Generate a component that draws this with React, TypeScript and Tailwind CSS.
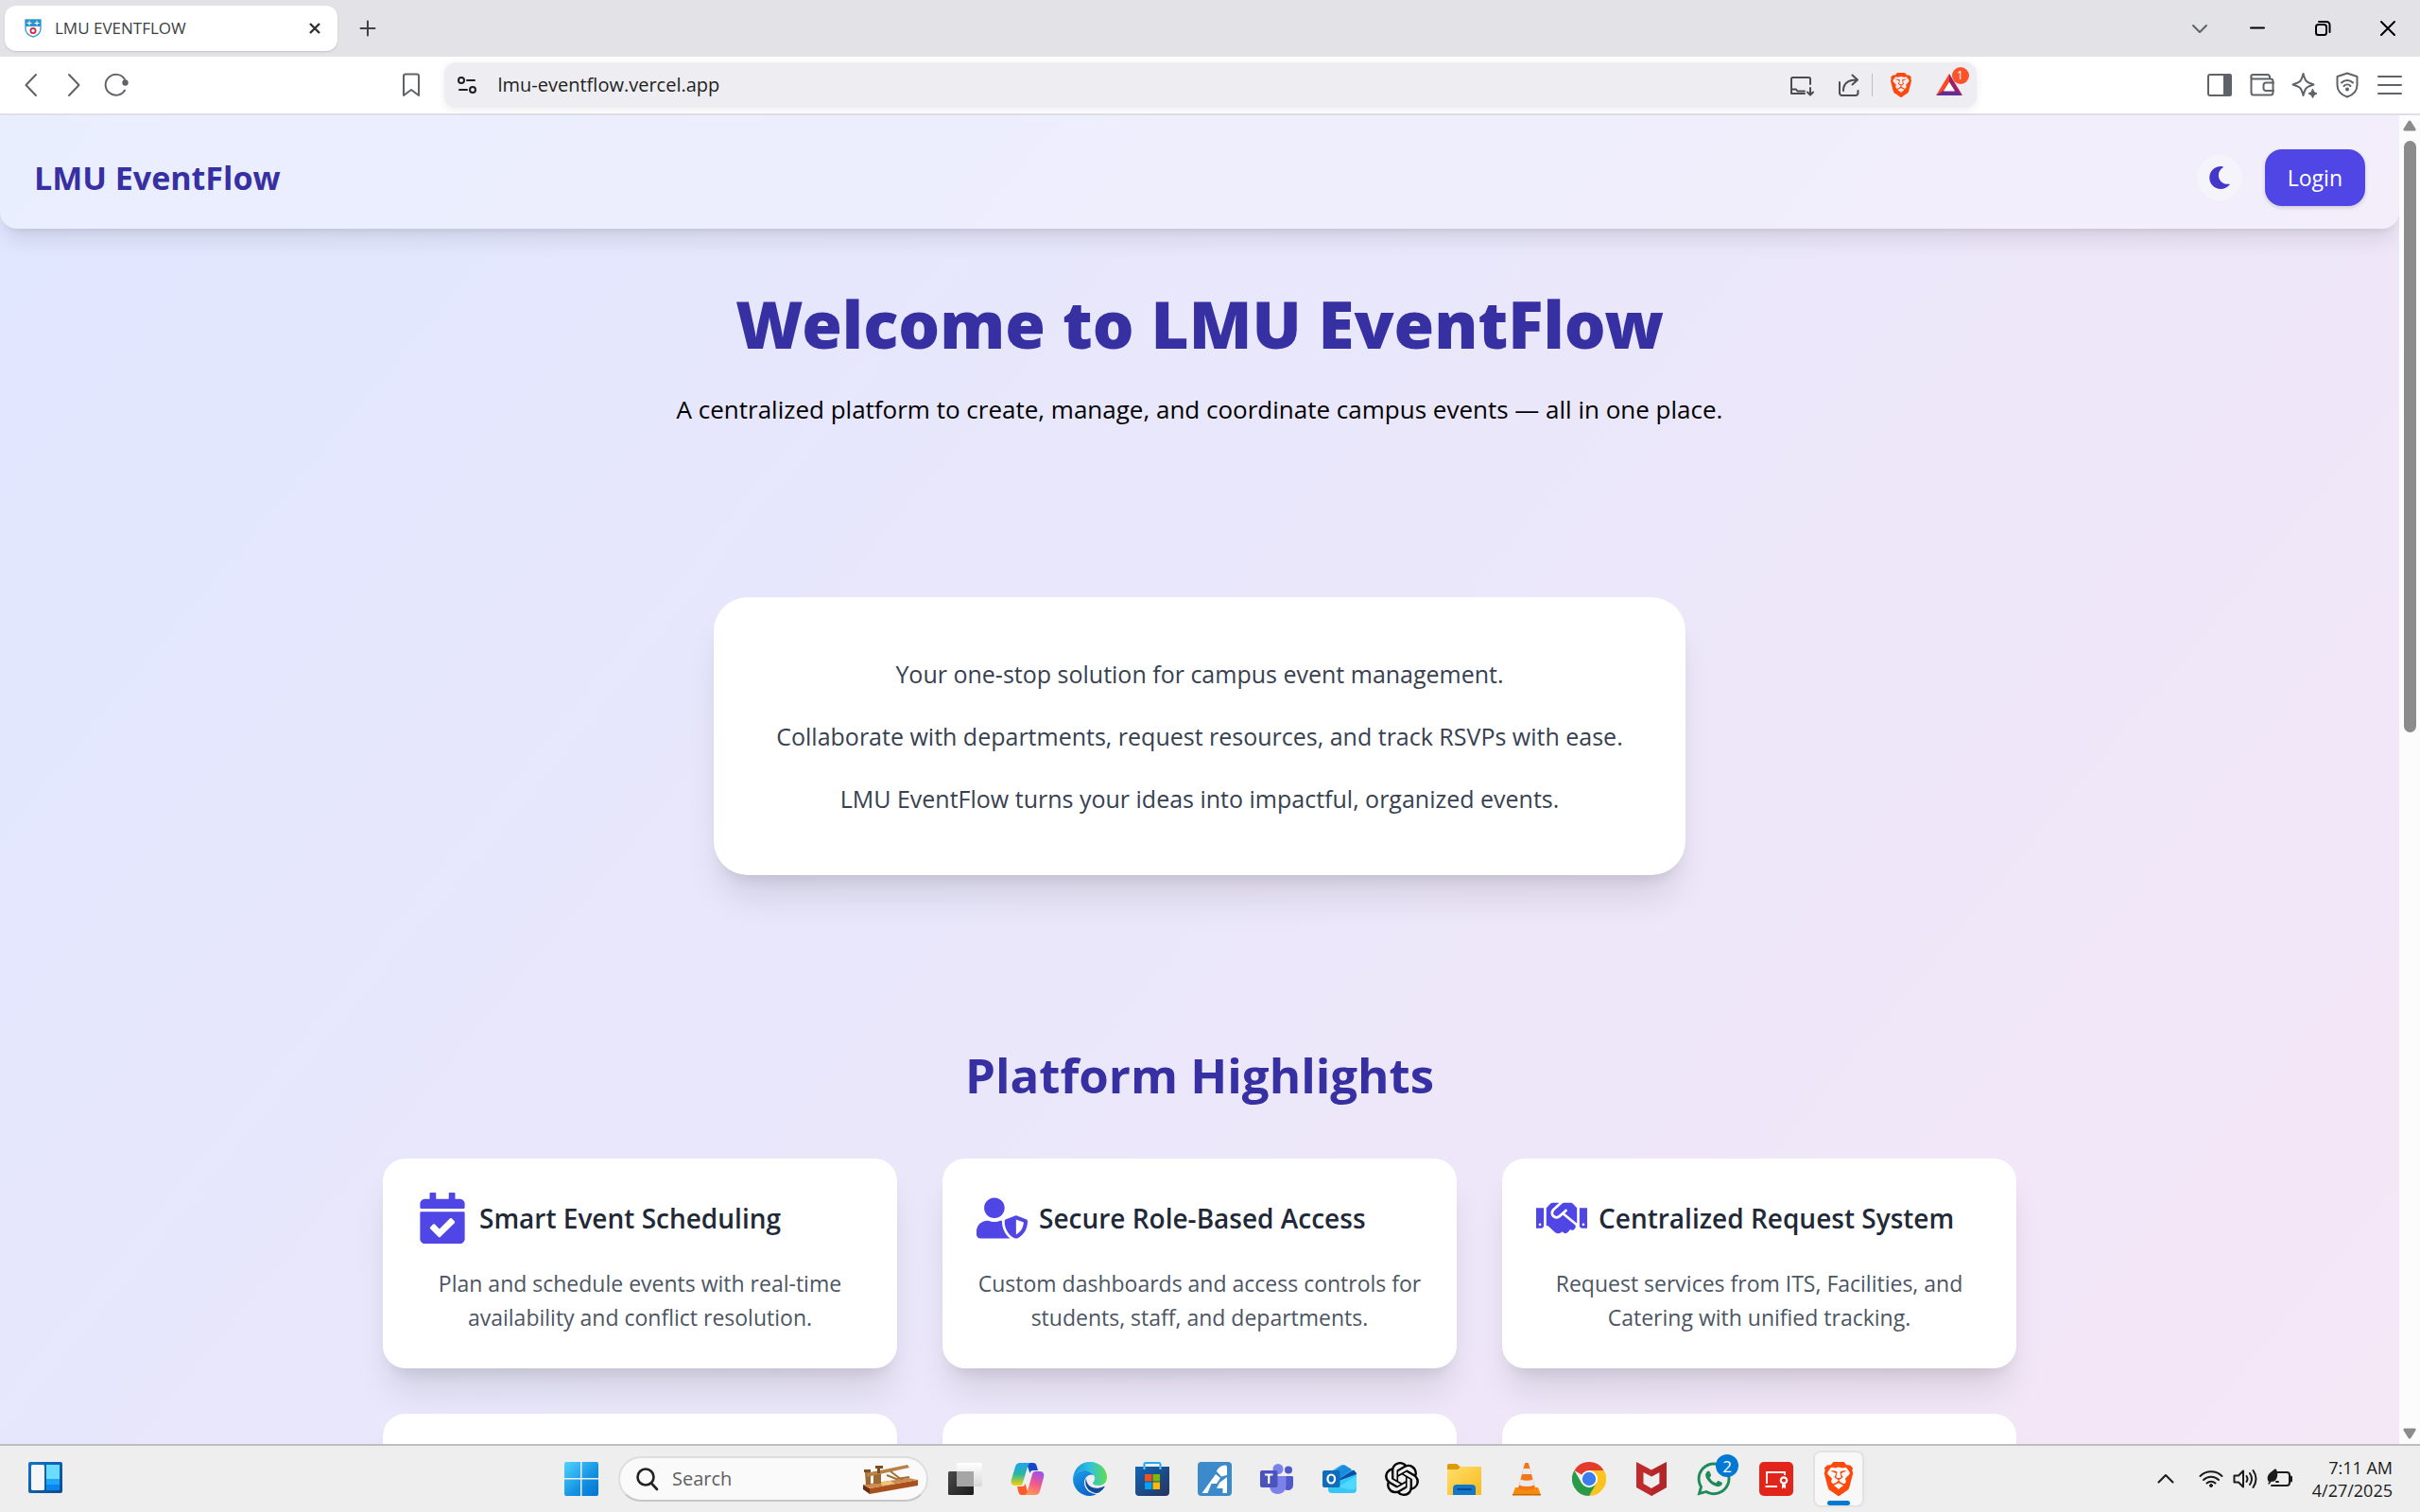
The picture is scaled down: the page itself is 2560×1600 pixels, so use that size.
import React from "react";
import { FaCalendarCheck, FaHandshake, FaMoon, FaUserShield, FaWhatsapp } from "react-icons/fa";
import { SiBrave, SiOpenai } from "react-icons/si";

type IconProps = { label: string; children: React.ReactNode; className?: string };

/* ---------- Browser chrome ---------- */

function ToolButton({ label, children, className = "text-[#5f6368]" }: IconProps) {
  return (
    <button type="button" aria-label={label} className={`relative grid size-[30px] shrink-0 place-items-center ${className}`}>
      {children}
    </button>
  );
}

function Line({ children, width = 2 }: { children: React.ReactNode; width?: number }) {
  return (
    <svg viewBox="0 0 30 30" className="size-[30px]" fill="none" stroke="currentColor" strokeWidth={width} strokeLinecap="round" strokeLinejoin="round" aria-hidden="true">
      {children}
    </svg>
  );
}

function TabStrip() {
  return (
    <div className="flex h-[60px] shrink-0 items-center bg-[#e3e2e7] pl-[5px]">
      <div className="flex h-12 w-[352px] items-center rounded-xl bg-white pr-3 pl-[21px] shadow-[0_1px_2px_rgba(0,0,0,0.15)]">
        <svg viewBox="0 0 18 20" className="h-5 w-[18px]" aria-hidden="true">
          <path d="M1 1h16v9c0 5-4 8-8 9-4-1-8-4-8-9z" fill="#fff" stroke="#3f9fd0" strokeWidth="1.4" />
          <path d="M1 1h16v7H1z" fill="#2b93cb" />
          <path d="M5 2v5M2.5 4.5h5M13 2v5M10.500 4.500h5" stroke="#fff" strokeWidth="1" />
          <circle cx="9" cy="12.500" r="2.600" fill="#fff" stroke="#cf2745" strokeWidth="1.800" />
        </svg>
        <span className="ml-[14px] flex-1 text-[17px] leading-6 text-[#3b3e42]">LMU EVENTFLOW</span>
        <button type="button" aria-label="Close tab" className="grid size-6 place-items-center text-[#2f3235]">
          <svg viewBox="0 0 24 24" className="size-6" stroke="currentColor" strokeWidth="2.400" aria-hidden="true">
            <path d="M7 7l10 10M17 7L7 17" />
          </svg>
        </button>
      </div>
      <button type="button" aria-label="New tab" className="ml-[17px] text-[#3f4246]">
        <Line>
          <path d="M15 7.500v15M7.500 15h15" />
        </Line>
      </button>
      <div className="ml-auto flex h-full items-center text-black">
        <button type="button" aria-label="Search tabs" className="mr-[11px] text-[#5f6368]">
          <Line>
            <path d="M8 12l7 7 7-7" />
          </Line>
        </button>
        <button type="button" aria-label="Minimize" className="grid h-full w-[69px] place-items-center">
          <Line>
            <path d="M8 14.500h14" />
          </Line>
        </button>
        <button type="button" aria-label="Restore" className="grid h-full w-[69px] place-items-center">
          <Line>
            <rect x="8" y="11" width="11" height="11" rx="2.500" />
            <path d="M11 8h8a3.500 3.500 0 0 1 3.500 3.500V19" />
          </Line>
        </button>
        <button type="button" aria-label="Close" className="grid h-full w-[69px] place-items-center">
          <Line>
            <path d="M8 8l14 14M22 8L8 22" />
          </Line>
        </button>
      </div>
    </div>
  );
}

function Toolbar() {
  return (
    <div className="grid h-[62px] shrink-0 grid-cols-[minmax(0,1fr)_minmax(0,1621px)_minmax(0,1fr)] items-center border-b-2 border-[#e0dfe5] bg-white">
      <div className="flex items-center gap-[15px] pr-5 pl-[18px]">
        <ToolButton label="Back">
          <Line><path d="M20 4L9.500 15 20 26" /></Line>
        </ToolButton>
        <ToolButton label="Forward">
          <Line><path d="M10 4l10.500 11L10 26" /></Line>
        </ToolButton>
        <ToolButton label="Reload">
          <Line>
            <path d="M24 20.500A11 11 0 1 1 24 9" />
            <circle cx="24.500" cy="12.500" r="2.200" fill="currentColor" />
          </Line>
        </ToolButton>
        <div className="ml-auto">
          <ToolButton label="Bookmark this page">
            <Line><path d="M7 5.500a2 2 0 0 1 2-2h12a2 2 0 0 1 2 2V26l-8-6-8 6z" /></Line>
          </ToolButton>
        </div>
      </div>

      <div className="flex h-12 items-center rounded-xl bg-[#ededf2] pr-[14px] pl-[10px] shadow-[0_2px_8px_rgba(0,0,0,0.08)]">
        <ToolButton label="Site information" className="text-[#1f1f1f]">
          <Line>
            <circle cx="8" cy="10" r="3" />
            <path d="M14 10h8M6 20h8" />
            <circle cx="20" cy="20" r="3" />
          </Line>
        </ToolButton>
        <input
          aria-label="Address"
          defaultValue="lmu-eventflow.vercel.app"
          className="ml-[17px] min-w-0 flex-1 bg-transparent text-[20px] leading-7 text-[#1f1f1f] outline-none"
        />
        <div className="flex items-center">
          <ToolButton label="Install app" className="mr-5 text-[#4b4d52]">
            <Line>
              <path d="M24 14V8.500A1.500 1.500 0 0 0 22.500 7h-17A1.500 1.500 0 0 0 4 8.500V24h14" />
              <path d="M4 19.500h5l1.500 2H18M24 18v7M21 22.500l3 3 3-3" />
            </Line>
          </ToolButton>
          <ToolButton label="Share" className="mr-[9px] text-[#4b4d52]">
            <Line>
              <path d="M5 12v11.500A2.500 2.500 0 0 0 7.500 26H22a2.500 2.500 0 0 0 2.500-2.500V21M9 21c0-7 4-11.500 14-11.500M18.500 4.500l5.500 5-5.500 5" />
            </Line>
          </ToolButton>
          <span className="mr-[15px] h-6 w-px bg-[#bdbdc4]" />
          <ToolButton label="Brave Shields" className="mr-[21px]">
            <BraveLion className="h-[28px] w-[26px]" />
          </ToolButton>
          <ToolButton label="Brave Rewards">
            <svg viewBox="0 0 30 30" className="size-[30px]" aria-hidden="true">
              <path d="M15 3L1 26l8-4 6-10z" fill="#ff4724" />
              <path d="M15 3l14 23-8-4-6-10z" fill="#9e1f63" />
              <path d="M1 26h28l-7.500-5h-13z" fill="#662d91" />
              <path d="M15 12l6 9.500H9z" fill="#fff" />
            </svg>
            <span className="absolute -top-1 left-[18px] grid size-[18px] place-items-center rounded-full bg-[#fb542b] text-[12px] leading-none text-white">1</span>
          </ToolButton>
        </div>
      </div>

      <div className="flex items-center justify-end gap-[15px] pr-[17px]">
        <ToolButton label="Sidebar">
          <Line>
            <rect x="3" y="4" width="24" height="22" rx="2" />
            <path d="M20 4h5a2 2 0 0 1 2 2v18a2 2 0 0 1-2 2h-5z" fill="currentColor" />
          </Line>
        </ToolButton>
        <ToolButton label="Wallet">
          <Line>
            <path d="M23 8V6.500A2.500 2.500 0 0 0 20.500 4h-15a2 2 0 0 0 0 4.500H24a2.500 2.500 0 0 1 2.500 2.500v12a2.500 2.500 0 0 1-2.500 2.500H6A2.500 2.500 0 0 1 3.500 23V6" />
            <path d="M27 12.500h-8a2.500 2.500 0 0 0-2.500 2.500v3.500A2.500 2.500 0 0 0 19 21h8" />
          </Line>
        </ToolButton>
        <ToolButton label="Leo AI">
          <Line>
            <path d="M13.500 3c2 8 3 9 11 11.500-8 2.500-9 3.500-11 11.500-2-8-3-9-11-11.500 8-2.500 9-3.500 11-11.500z" />
            <path d="M23.500 19.500l1.500 3 3 1.500-3 1.500-1.500 3-1.500-3-3-1.500 3-1.500z" fill="currentColor" strokeWidth="1" />
          </Line>
        </ToolButton>
        <ToolButton label="VPN">
          <Line>
            <path d="M15 2.500l10.500 3.500v9c0 6.500-4.500 10.500-10.500 12.500C9 25.500 4.500 21.500 4.500 15V6z" />
            <path d="M9 12.500a8.500 8.500 0 0 1 12 0M11.500 16a5 5 0 0 1 7 0" />
            <circle cx="15" cy="19.500" r="1" fill="currentColor" />
          </Line>
        </ToolButton>
        <ToolButton label="Menu">
          <Line><path d="M3 6h24M3 15h24M3 24h24" /></Line>
        </ToolButton>
      </div>
    </div>
  );
}

function BraveLion({ className }: { className: string }) {
  return <SiBrave className={`${className} text-[#fb4a0c]`} aria-hidden="true" />;
}

function Scrollbar() {
  return (
    <div className="flex w-[22px] shrink-0 flex-col items-center bg-[#fcfcfc] py-[5px]" aria-hidden="true">
      <svg viewBox="0 0 14 12" className="h-3 w-[14px]" fill="#8b8b8b"><path d="M7 0.500Q7.800 0.500 8.500 1.500l5 8Q14 11.500 12.500 11.500h-11Q0 11.500.5 9.500l5-8Q6.200.5 7 .5z" /></svg>
      <div className="mt-[10px] h-[626px] w-[13px] rounded-full bg-[#8b8b8b]" />
      <svg viewBox="0 0 14 12" className="mt-auto h-3 w-[14px]" fill="#8b8b8b"><path d="M7 11.500Q7.800 11.500 8.500 10.500l5-8Q14 .5 12.500.5h-11Q0 .5.5 2.500l5 8Q6.200 11.500 7 11.500z" /></svg>
    </div>
  );
}

/* ---------- Site ---------- */

const FEATURES = [
  { Icon: FaCalendarCheck, title: "Smart Event Scheduling", text: "Plan and schedule events with real-time availability and conflict resolution." },
  { Icon: FaUserShield, title: "Secure Role-Based Access", text: "Custom dashboards and access controls for students, staff, and departments." },
  { Icon: FaHandshake, title: "Centralized Request System", text: "Request services from ITS, Facilities, and Catering with unified tracking." },
];

const CARD_SHADOW = "shadow-[0_30px_37px_-7px_rgba(0,0,0,0.1),0_12px_15px_-9px_rgba(0,0,0,0.1)]";

function Site() {
  return (
    <div className="min-h-[3070px] bg-linear-to-br from-[#e0e7ff] to-[#fce7f3]">
      <header className="flex items-center justify-between rounded-b-[18px] bg-white/30 px-9 pt-9 pb-6 shadow-[0_15px_22px_-4px_rgba(0,0,0,0.1),0_6px_9px_-6px_rgba(0,0,0,0.1)]">
        <a href="#home" className="text-[34px] leading-[54px] font-bold text-[#3730a3]">LMU EventFlow</a>
        <div className="flex items-center gap-6">
          <button type="button" aria-label="Toggle dark mode" className="grid size-12 place-items-center rounded-full bg-[#f5f4fb] text-[24px] text-[#4338ca]">
            <FaMoon />
          </button>
          <button type="button" className="h-[60px] rounded-[18px] bg-[#4f46e5] px-6 text-[23px] leading-9 text-white shadow-[0_2px_4px_rgba(0,0,0,0.15)]">Login</button>
        </div>
      </header>

      <main className="flex flex-col items-center px-6 text-center">
        <h1 className="mt-16 font-['Noto_Sans',sans-serif] text-[69px] leading-[72px] font-black text-[#3730a3]">Welcome to LMU EventFlow</h1>
        <p className="mt-[34px] text-[26px] leading-[42px] text-black">A centralized platform to create, manage, and coordinate campus events — all in one place.</p>

        <section className={`mt-[178px] flex w-full max-w-[1028px] flex-col gap-6 rounded-[36px] bg-white p-[60px] text-[25px] leading-[42px] text-[#374151] ${CARD_SHADOW}`}>
          <p>Your one-stop solution for campus event management.</p>
          <p>Collaborate with departments, request resources, and track RSVPs with ease.</p>
          <p>LMU EventFlow turns your ideas into impactful, organized events.</p>
        </section>

        <h2 className="mt-[181px] text-[51px] leading-[60px] font-bold text-[#3730a3]">Platform Highlights</h2>
        <div className="mt-[59px] grid w-full max-w-[1728px] grid-cols-3 gap-12">
          {FEATURES.map(({ Icon, title, text }) => (
            <article key={title} className={`rounded-3xl bg-white p-9 ${CARD_SHADOW}`}>
              <div className="flex items-center gap-3">
                <Icon className="size-[54px] shrink-0 text-[#4f46e5]" aria-hidden="true" />
                <h3 className="text-[28px] leading-[42px] font-semibold whitespace-nowrap text-[#1f2937]">{title}</h3>
              </div>
              <p className="mt-6 text-[23px] leading-9 text-[#4b5563]">{text}</p>
            </article>
          ))}
          {[0, 1, 2].map((n) => (
            <article key={n} className={`h-[222px] rounded-3xl bg-white ${CARD_SHADOW}`} />
          ))}
        </div>
      </main>
    </div>
  );
}

/* ---------- Taskbar ---------- */

function App36({ label, children }: IconProps) {
  return (
    <button type="button" aria-label={label} className="relative grid h-[60px] w-[54px] shrink-0 place-items-center">
      {children}
    </button>
  );
}

function Art({ children }: { children: React.ReactNode }) {
  return <svg viewBox="0 0 36 36" className="size-9" aria-hidden="true">{children}</svg>;
}

function Telegraph() {
  return (
    <svg viewBox="0 0 60 32" className="h-8 w-[60px] shrink-0" aria-hidden="true">
      <path d="M1 22l7 4v6l-7-5z" fill="#6b2c12" />
      <path d="M8 26l51-9v6L8 32z" fill="#a9501f" />
      <path d="M1 22l48-7 10 2-51 9z" fill="#d08a4e" />
      <path d="M18 20l12-2 4 3-12 2z" fill="#f0c777" />
      <path d="M3 9l6-2v15H4zM12 8h8v13h-8z" fill="#9a6a35" />
      <path d="M4 10l44-9 2 3L5 14z" fill="#b98145" />
      <path d="M14 2h8v3h-3v5h-3V5h-2zM2 6h7v3H2z" fill="#7d4d22" />
      <path d="M30 8l12 9M26 12l10 4 14-2" stroke="#a06e38" strokeWidth="2" fill="none" />
    </svg>
  );
}

function Taskbar() {
  return (
    <footer className="grid h-[72px] shrink-0 grid-cols-[minmax(0,1fr)_auto_minmax(0,1fr)] items-center border-t-2 border-[#bdbdbd] bg-[#eeeeee]">
      <button type="button" aria-label="Widgets" className="ml-[30px] size-9">
        <Art>
          <defs>
            <linearGradient id="wg" x1="0" y1="0" x2="1" y2="1"><stop offset="0" stopColor="#1173c7" /><stop offset="1" stopColor="#0a4c8f" /></linearGradient>
          </defs>
          <rect width="36" height="33" rx="2" fill="url(#wg)" />
          <rect x="3" y="3" width="14" height="27" rx="1.500" fill="#f6f6f6" />
          <path d="M19 3h14v15H19z" fill="#6bdcff" />
          <path d="M19 18h14v6H19z" fill="#1fa6fb" />
          <path d="M19 24h14v6H19z" fill="#0a84ee" />
        </Art>
      </button>

      <div className="flex items-center gap-3">
        <App36 label="Start">
          <Art>
            <defs>
              <linearGradient id="st" x1="0" y1="0" x2="1" y2="1"><stop offset="0" stopColor="#50d4ff" /><stop offset="0.600" stopColor="#1391e2" /><stop offset="1" stopColor="#0073d0" /></linearGradient>
            </defs>
            <path d="M2 0h15v17H0V2a2 2 0 0 1 2-2zM18.500 0H34a2 2 0 0 1 2 2v15H18.500zM0 18.500h17V36H2a2 2 0 0 1-2-2zM18.500 18.500H36V34a2 2 0 0 1-2 2H18.500z" fill="url(#st)" />
          </Art>
        </App36>
        <label className="flex h-12 w-[328px] items-center rounded-full border-2 border-[#dedede] border-b-[#c6c6c6] bg-[#fafafa] pr-2 pl-[15px]">
          <svg viewBox="0 0 26 26" className="size-[26px] shrink-0" fill="none" stroke="#222" strokeWidth="2.600" strokeLinecap="round" aria-hidden="true">
            <circle cx="12" cy="11" r="8.500" />
            <path d="M18 17.500l6 6.500" />
          </svg>
          <input type="search" aria-label="Search" placeholder="Search" className="ml-[14px] min-w-0 flex-1 bg-transparent text-[20px] leading-7 outline-none placeholder:text-[#5f5f5f]" />
          <Telegraph />
        </label>
        <App36 label="Task view">
          <Art>
            <defs>
              <linearGradient id="tv" x1="0" y1="0" x2="1" y2="1"><stop offset="0" stopColor="#4a4a4a" /><stop offset="1" stopColor="#1c1c1c" /></linearGradient>
              <linearGradient id="tw" x1="0" y1="0" x2="0" y2="1"><stop offset="0" stopColor="#ffffff" /><stop offset="1" stopColor="#d9d9d9" /></linearGradient>
            </defs>
            <rect y="10" width="27" height="25" rx="1.500" fill="url(#tv)" />
            <rect x="9" y="1" width="27" height="25" rx="1.500" fill="url(#tw)" />
            <path d="M9 10h18v16H10.500A1.500 1.500 0 0 1 9 24.500z" fill="#a6a6a6" />
          </Art>
        </App36>
        <App36 label="Copilot">
          <Art>
            <defs>
              <linearGradient id="ca" x1="0.300" y1="0" x2="0.300" y2="1"><stop offset="0" stopColor="#1fa2ef" /><stop offset="0.500" stopColor="#2bb6a3" /><stop offset="1" stopColor="#f5d300" /></linearGradient>
              <linearGradient id="cb" x1="0.600" y1="0" x2="0.300" y2="1"><stop offset="0" stopColor="#a24fe8" /><stop offset="0.500" stopColor="#f1598b" /><stop offset="1" stopColor="#ff9a4d" /></linearGradient>
            </defs>
            <path d="M17 1h7c2 0 3 1 3.600 3L29 9h-5c-2 0-3 1-3.600 3z" fill="#1647c9" />
            <path d="M10 1h11c-2 1-2.600 3-3.200 5L13 22c-.7 2.500-2 3-4 3H5c-4 0-5-3-4-6.500L5 5c1-3 2.500-4 5-4z" fill="url(#ca)" />
            <path d="M19 35h-7c-2 0-3-1-3.600-3L7 26h5c2 0 3-1 3.600-3z" fill="#ff5a2d" />
            <path d="M26 35H15c2-1 2.600-3 3.200-5L23 13c.7-2.500 2-3 4-3h4c4 0 5 3 4 6.500L31 31c-1 3-2.500 4-5 4z" fill="url(#cb)" />
          </Art>
        </App36>
        <App36 label="Microsoft Edge">
          <Art>
            <defs>
              <linearGradient id="ea" x1="0" y1="0.300" x2="1" y2="0.300"><stop offset="0" stopColor="#1793dd" /><stop offset="0.500" stopColor="#2fc2df" /><stop offset="1" stopColor="#62dd4c" /></linearGradient>
              <linearGradient id="eb" x1="0" y1="0" x2="0.600" y2="1"><stop offset="0" stopColor="#1aa0ea" /><stop offset="1" stopColor="#0b62c9" /></linearGradient>
            </defs>
            <path d="M0 18C1 7 8 0 18 0c11 0 18 8 18 16 0 6-4 9-9 9-4 0-6-1-6-2.500 0-1 2-2 2-5C23 13 18 9 12 9 6 9 1 13 0 18z" fill="url(#ea)" />
            <path d="M0 18C1 12.500 6 9 12 9c4 0 8 2 10 5-5-2-10 2-10 8 0 7 6 12 13 12-2 1.300-4.500 2-7 2C8 36 0 28 0 18z" fill="url(#eb)" />
            <path d="M14 17c-3 9 4 16 12 16 3-1 6-4 7.500-6.500.4-.8-.3-1-1-.6C24 30 14 27 14 17z" fill="#104a9c" />
          </Art>
        </App36>
        <App36 label="Microsoft Store">
          <Art>
            <defs>
              <linearGradient id="ms" x1="0" y1="0" x2="1" y2="1"><stop offset="0" stopColor="#0f67b8" /><stop offset="1" stopColor="#26335e" /></linearGradient>
            </defs>
            <path d="M9.500 8V2.500a1.500 1.500 0 0 1 1.500-1.500h14a1.500 1.500 0 0 1 1.500 1.500V8" fill="none" stroke="#24a9f0" strokeWidth="2" />
            <path d="M0 5h36v27a4 4 0 0 1-4 4H4a4 4 0 0 1-4-4z" fill="url(#ms)" />
            <path d="M9.500 8V5M26.500 8V5" stroke="#5ccbfb" strokeWidth="2" />
            <path d="M10 13h7.500v7.500H10z" fill="#f25022" /><path d="M18.500 13H26v7.500h-7.500z" fill="#7fba00" />
            <path d="M10 21.500h7.500V29H10z" fill="#00a4ef" /><path d="M18.500 21.500H26V29h-7.500z" fill="#ffb900" />
          </Art>
        </App36>
        <App36 label="AI editor">
          <Art>
            <rect width="36" height="36" rx="4" fill="#3c8ac9" />
            <path d="M4.500 33L19 13l5 4-4 6h-5.500L10.500 33zM20 10c1-3 4-6.500 10-6.500l1 1.500v9l-6 1.500zM23 22l8-6v17h-4.500v-5H20z" fill="#fff" />
          </Art>
        </App36>
        <App36 label="Microsoft Teams">
          <Art>
            <circle cx="30" cy="8.500" r="4" fill="#5059c9" />
            <path d="M25 15h8.500c1 0 1.500.6 1.500 1.500V24c0 4-2.500 6-6 6-2 0-4-1-4-3z" fill="#5059c9" />
            <circle cx="19" cy="7.500" r="5.500" fill="#7b83eb" />
            <path d="M10 15h17.500v10c0 5-3.500 9-9 9S10 30 10 25z" fill="#7b83eb" />
            <rect y="9" width="18.500" height="18" rx="2" fill="#4b53bc" />
            <path d="M5 13.500h8.500M9.250 13.500V23" stroke="#fff" strokeWidth="2.200" />
          </Art>
        </App36>
        <App36 label="Outlook">
          <Art>
            <path d="M6 12L19.500 3.500q1.500-1 3 0L36 12v4L18 28 6 20z" fill="#28a8ea" />
            <path d="M11 11l12-8 8 5-14 10z" fill="#1b8bdc" />
            <path d="M16 19L33 8.500l3 3.500v3L17 27z" fill="#0c4da2" />
            <path d="M6 24l30-11v16a4 4 0 0 1-4 4H10a4 4 0 0 1-4-4z" fill="#35c8f6" />
            <path d="M17 26l19-11v13q-6 3-19-2z" fill="#50d9ff" />
            <rect y="9" width="18.500" height="18" rx="2" fill="#0f6cbd" />
            <ellipse cx="9.250" cy="18" rx="3.800" ry="4.500" fill="none" stroke="#fff" strokeWidth="2.200" />
          </Art>
        </App36>
        <App36 label="ChatGPT"><SiOpenai className="size-9 text-black" aria-hidden="true" /></App36>
        <App36 label="File Explorer">
          <Art>
            <defs><linearGradient id="fe" x1="0" y1="0" x2="1" y2="1"><stop offset="0" stopColor="#ffdf6b" /><stop offset="1" stopColor="#f9b91c" /></linearGradient></defs>
            <path d="M0 3.500A1.500 1.500 0 0 1 1.500 2H10l4 3.500-4 4H0z" fill="#dd9a06" />
            <path d="M0 8h11l4-3h20a1 1 0 0 1 1 1v29H0z" fill="url(#fe)" />
            <path d="M6 35v-7a4 4 0 0 1 4-4h16a4 4 0 0 1 4 4v7z" fill="#1377c9" />
            <path d="M11 29h14" stroke="#0a4c91" strokeWidth="2" strokeLinecap="round" />
          </Art>
        </App36>
        <App36 label="VLC media player">
          <Art>
            <path d="M6 27h24l3 8H3z" fill="#f58a0b" />
            <path d="M3 34h30v1.500H3z" fill="#c96500" />
            <path d="M16 1.500q2-1.500 4 0L27 28q-9 4-18 0z" fill="#f5761a" />
            <path d="M14.600 7h6.800l1.700 6H12.900z" fill="#e8eaec" />
            <path d="M11.500 18.500q6.500 2.500 13 0l1.500 6q-8 3-16 0z" fill="#e8eaec" />
          </Art>
        </App36>
        <App36 label="Google Chrome">
          <Art>
            <path d="M18 18L2.400 9A18 18 0 0 1 33.600 9z" fill="#e33b2e" />
            <path d="M18 18l15.600-9A18 18 0 0 1 18 36l8-13.500z" fill="#fcc31e" />
            <path d="M18 9h15.600a18 18 0 0 1 0 18L18 36l7.800-13.500L26 18z" fill="#fcc31e" />
            <path d="M2.400 9l7.800 13.500L18 27l7.800-4.500L18 36A18 18 0 0 1 2.400 9z" fill="#2a9a48" />
            <circle cx="18" cy="18" r="9" fill="#fff" /><circle cx="18" cy="18" r="7.200" fill="#3b7ded" />
          </Art>
        </App36>
        <App36 label="McAfee">
          <Art>
            <path d="M2 0l16 8.500L34 0v27l-16 9-16-9z" fill="#bf2b2c" />
            <path d="M9.500 11l8.500 4.500 8.500-4.500v12L18 28l-8.500-5z" fill="#eee" />
            <path d="M18 8.500L34 0v27l-16 9v-8l8.500-5V11L18 15.500z" fill="#a82426" opacity="0.500" />
          </Art>
        </App36>
        <App36 label="WhatsApp">
          <FaWhatsapp className="size-10 text-[#1f8a5a]" aria-hidden="true" />
          <span className="absolute top-1 left-[29px] grid size-6 place-items-center rounded-full bg-[#0078d4] text-[17px] leading-none text-white">2</span>
        </App36>
        <App36 label="Certificates">
          <Art>
            <rect width="36" height="36" rx="5" fill="#e1251b" />
            <path d="M8 23V11h19v3M6.500 26H19" fill="none" stroke="#fff" strokeWidth="1.800" />
            <circle cx="26" cy="19.500" r="3.200" fill="none" stroke="#fff" strokeWidth="2.200" />
            <path d="M24 23.500v5l2-1.500 2 1.500v-5" fill="#fff" />
          </Art>
        </App36>
        <button type="button" aria-label="Brave" className="relative grid h-[60px] w-[54px] shrink-0 place-items-center rounded-lg border-2 border-[#e2e2e2] bg-[#f8f8f8] shadow-[3px_0_0_#ececec]">
          <BraveLion className="size-9" />
          <span className="absolute bottom-0 left-[13px] h-[5px] w-6 rounded-full bg-[#0078d4]" />
        </button>
      </div>

      <div className="flex items-center justify-end pr-[29px] text-[#1b1b1b]">
        <button type="button" aria-label="Show hidden icons" className="mr-[18px] shrink-0"><Line><path d="M7.500 18.500L15 11l7.500 7.500" /></Line></button>
        <button type="button" aria-label="Network, volume and battery" className="mr-5 flex shrink-0 gap-[6px]">
          <Line>
            <path d="M3.500 12a16.500 16.500 0 0 1 23 0M7 16a11.500 11.500 0 0 1 16 0M10.500 19.500a6.500 6.500 0 0 1 9 0" />
            <circle cx="15" cy="22" r="1.500" fill="currentColor" strokeWidth="1" />
          </Line>
          <Line>
            <path d="M3.500 11.500H8l5-5v17l-5-5H3.500zM16.500 12q2 3 0 6M20 9q4 6 0 12M23.500 6q6 9 0 18" />
          </Line>
          <Line>
            <path d="M13 8h10a3 3 0 0 1 3 3v8a3 3 0 0 1-3 3H7" />
            <path d="M27.500 13v4" strokeWidth="3" />
            <path d="M4 17c-2-5 1-8 7-12 3 5 1 12-3 12zM4 20l4-5" fill="currentColor" strokeWidth="1.500" />
            <path d="M12 18h2" />
          </Line>
        </button>
        <time className="shrink-0 text-right text-[18px] leading-6">7:11 AM<br />4/27/2025</time>
      </div>
    </footer>
  );
}

export default function App() {
  return (
    <div className="flex h-screen flex-col overflow-hidden bg-white font-['Open_Sans',sans-serif]">
      <TabStrip />
      <Toolbar />
      <div className="flex min-h-0 flex-1">
        <div className="min-w-0 flex-1 overflow-hidden">
          <Site />
        </div>
        <Scrollbar />
      </div>
      <Taskbar />
    </div>
  );
}
